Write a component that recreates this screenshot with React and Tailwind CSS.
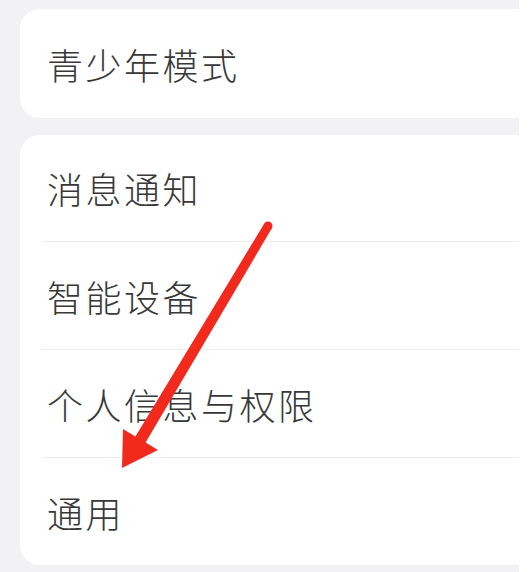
import React from "react";

const font = { fontFamily: '"Noto Sans CJK SC", "Noto Sans", sans-serif' };

function Row({ label, h }) {
  return (
    <div className={`${h} flex items-center pl-[27px]`}>
      <span className="text-[36px] leading-none tracking-[2.5px] font-light text-[#383838]" style={font}>
        {label}
      </span>
    </div>
  );
}

function Divider() {
  return <div className="h-px ml-[22px] bg-[#ececee]" />;
}

export default function App() {
  return (
    <div className="w-[529px] h-[572px] bg-white flex overflow-hidden">
      <div className="relative w-[519px] h-[572px] shrink-0 bg-[#f2f2f5] overflow-hidden pl-[20px] pt-[9px]">
        <div className="w-[540px] h-[109px] bg-white rounded-[20px] flex items-center pl-[27px]">
          <span className="text-[36px] leading-none tracking-[2.5px] font-light text-[#383838]" style={font}>
            青少年模式
          </span>
        </div>
        <div className="mt-[17px] w-[540px] bg-white rounded-[20px] flex flex-col">
          <Row label="消息通知" h="h-[106px]" />
          <Divider />
          <Row label="智能设备" h="h-[107px]" />
          <Divider />
          <Row label="个人信息与权限" h="h-[107px]" />
          <Divider />
          <Row label="通用" h="h-[107px]" />
        </div>
        <svg
          className="absolute left-0 top-0 pointer-events-none"
          width="519"
          height="572"
          viewBox="0 0 519 572"
        >
          <circle cx="268" cy="226" r="4.5" fill="#f22a1e" />
          <polygon
            points="264.2,223.7 271.8,228.3 145.6,442.6 158,450 122,468 123,429 135.4,436.4"
            fill="#f22a1e"
          />
        </svg>
      </div>
    </div>
  );
}
